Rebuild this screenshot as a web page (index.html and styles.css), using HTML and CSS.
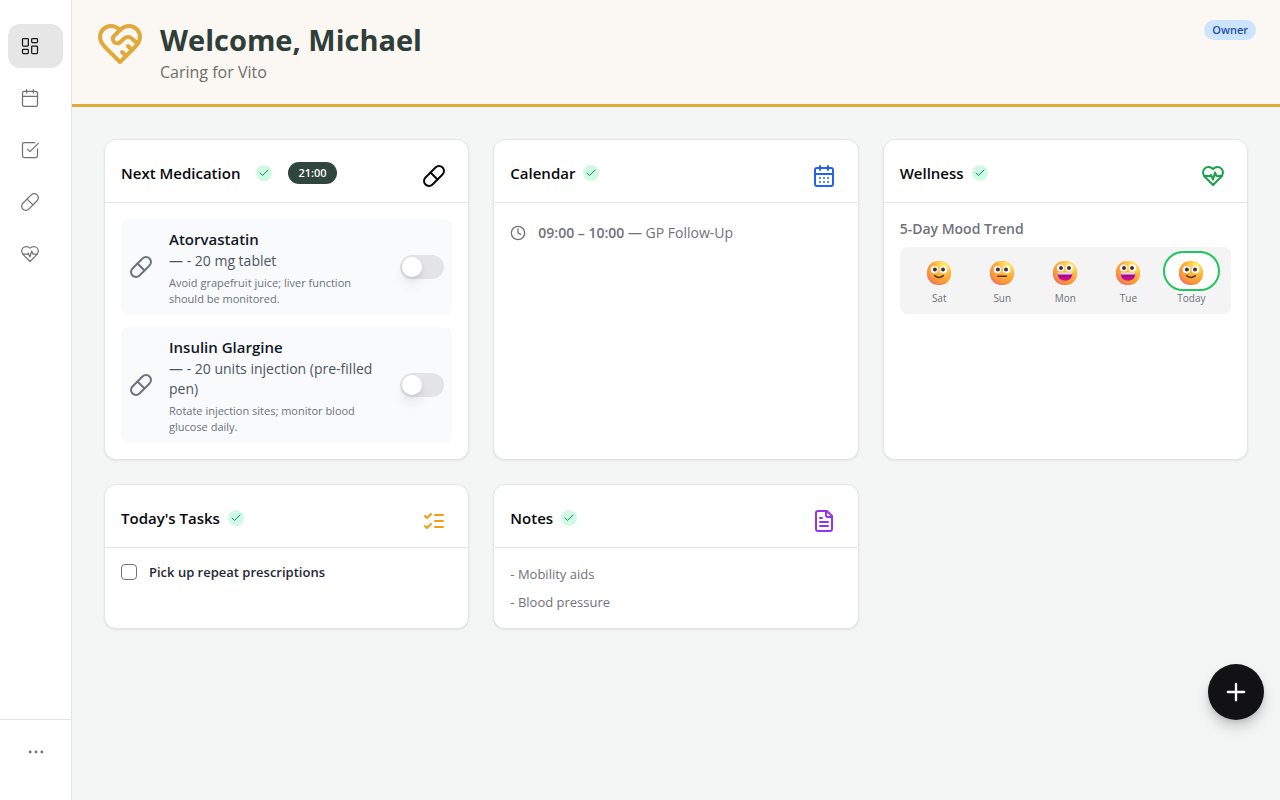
FILE: index.html
```html
<!DOCTYPE html>
<html lang="en">
<head>
    <meta charset="UTF-8">
    <meta name="viewport" content="width=device-width, initial-scale=1.0">
    <title>Dashboard</title>
    <link rel="stylesheet" href="styles.css">
</head>
<body>

    <!-- shared icons -->
    <svg class="sprite" width="0" height="0" aria-hidden="true">
        <defs>
            <radialGradient id="face" cx="0.72" cy="0.2" r="0.9">
                <stop offset="0" stop-color="#fff478"/>
                <stop offset="0.45" stop-color="#ffb43c"/>
                <stop offset="0.8" stop-color="#fb9538"/>
                <stop offset="1" stop-color="#ee6a70"/>
            </radialGradient>
            <linearGradient id="mouth" x1="0" y1="0" x2="0" y2="1">
                <stop offset="0" stop-color="#8a0a8c"/>
                <stop offset="1" stop-color="#dc0c94"/>
            </linearGradient>
        </defs>
        <symbol id="pill" viewBox="0 0 24 24">
            <path d="m10.5 20.5 10-10a4.95 4.95 0 1 0-7-7l-10 10a4.95 4.95 0 1 0 7 7Z"/>
            <path d="m8.5 8.5 7 7"/>
        </symbol>
        <symbol id="heart-pulse" viewBox="0 0 24 24">
            <path d="M19 14c1.49-1.46 3-3.21 3-5.5A5.5 5.5 0 0 0 16.5 3c-1.76 0-3 .5-4.5 2-1.5-1.5-2.74-2-4.5-2A5.5 5.5 0 0 0 2 8.5c0 2.3 1.5 4.05 3 5.5l7 7Z"/>
            <path d="M3.22 12H9.5l.5-1 2 4.5 2-7 1.5 3.5h5.27"/>
        </symbol>
        <symbol id="check" viewBox="0 0 24 24">
            <path d="M20 6 9 17l-5-5"/>
        </symbol>
        <symbol id="eyes" viewBox="0 0 24 24">
            <rect width="24" height="24" rx="11" fill="url(#face)"/>
            <circle cx="7.4" cy="8.7" r="3.6" fill="#fff"/>
            <circle cx="16.5" cy="8.7" r="3.6" fill="#fff"/>
            <circle cx="7.9" cy="8.6" r="2" fill="#4a2b3c"/>
            <circle cx="16" cy="8.6" r="2" fill="#4a2b3c"/>
        </symbol>
        <symbol id="smile" viewBox="0 0 24 24">
            <use href="#eyes"/>
            <path d="M7.6 14.6q4.4 3.6 8.8 0" fill="none" stroke="#5a3030" stroke-width="1.5" stroke-linecap="round"/>
        </symbol>
        <symbol id="neutral" viewBox="0 0 24 24">
            <use href="#eyes"/>
            <path d="M7.8 15.3h8.6" fill="none" stroke="#5a3030" stroke-width="1.6" stroke-linecap="round"/>
        </symbol>
        <symbol id="grin" viewBox="0 0 24 24">
            <rect width="24" height="24" rx="11" fill="url(#face)"/>
            <circle cx="7.6" cy="7" r="3.6" fill="#fff"/>
            <circle cx="16.4" cy="7" r="3.6" fill="#fff"/>
            <circle cx="8" cy="6.9" r="2" fill="#4a2b3c"/>
            <circle cx="16" cy="6.9" r="2" fill="#4a2b3c"/>
            <path d="M4.6 12h14.8c0 4.8-2.8 7.7-7.4 7.7S4.6 16.8 4.6 12z" fill="url(#mouth)"/>
            <path d="M4.6 11.6h14.8l-.3 1.8H4.9z" fill="#f3d9e6"/>
        </symbol>
    </svg>

    <aside class="sidebar">
        <nav class="nav">
            <a class="nav-link active" href="#" aria-label="Dashboard">
                <svg class="icon" viewBox="0 0 24 24"><rect width="7" height="9" x="3" y="3" rx="1"/><rect width="7" height="5" x="14" y="3" rx="1"/><rect width="7" height="9" x="14" y="12" rx="1"/><rect width="7" height="5" x="3" y="16" rx="1"/></svg>
            </a>
            <a class="nav-link" href="#" aria-label="Calendar">
                <svg class="icon" viewBox="0 0 24 24"><path d="M8 2v4M16 2v4"/><rect width="18" height="18" x="3" y="4" rx="2"/><path d="M3 10h18"/></svg>
            </a>
            <a class="nav-link" href="#" aria-label="Tasks">
                <svg class="icon" viewBox="0 0 24 24"><path d="M21 10.5V19a2 2 0 0 1-2 2H5a2 2 0 0 1-2-2V5a2 2 0 0 1 2-2h12.5"/><path d="m9 11 3 3L22 4"/></svg>
            </a>
            <a class="nav-link" href="#" aria-label="Medication">
                <svg class="icon"><use href="#pill"/></svg>
            </a>
            <a class="nav-link" href="#" aria-label="Wellness">
                <svg class="icon"><use href="#heart-pulse"/></svg>
            </a>
        </nav>
        <div class="sidebar-footer">
            <button class="more" type="button" aria-label="More">
                <svg class="icon" viewBox="0 0 24 24"><circle cx="5" cy="12" r="1"/><circle cx="12" cy="12" r="1"/><circle cx="19" cy="12" r="1"/></svg>
            </button>
        </div>
    </aside>

    <div class="page">
        <header class="top">
            <svg class="logo" viewBox="0 0 24 24"><path d="M19 14c1.49-1.46 3-3.21 3-5.5A5.5 5.5 0 0 0 16.5 3c-1.76 0-3 .5-4.5 2-1.5-1.5-2.74-2-4.5-2A5.5 5.5 0 0 0 2 8.5c0 2.3 1.5 4.05 3 5.5l7 7Z"/><path d="M12 5 9.04 7.96a2.17 2.17 0 0 0 0 3.08c.82.82 2.13.85 3 .07l2.07-1.9a2.82 2.82 0 0 1 3.79 0l2.96 2.66"/><path d="m18 15-2-2"/><path d="m15 18-2-2"/></svg>
            <div class="greeting">
                <h1>Welcome, Michael</h1>
                <p>Caring for Vito</p>
            </div>
            <span class="role">Owner</span>
        </header>

        <main class="grid">
            <section class="card">
                <div class="card-head">
                    <div class="card-title wide">
                        <h2>Next Medication</h2>
                        <span class="ok"><svg><use href="#check"/></svg></span>
                        <span class="time">21:00</span>
                    </div>
                    <svg class="card-icon"><use href="#pill"/></svg>
                </div>
                <ul class="card-body meds">
                    <li class="med">
                        <svg class="med-icon"><use href="#pill"/></svg>
                        <label class="med-text" for="med-1">
                            <span class="med-name">Atorvastatin</span>
                            <span class="med-dose">— - 20 mg tablet</span>
                            <span class="med-note">Avoid grapefruit juice; liver function<br>should be monitored.</span>
                        </label>
                        <input class="switch" type="checkbox" id="med-1">
                    </li>
                    <li class="med">
                        <svg class="med-icon"><use href="#pill"/></svg>
                        <label class="med-text" for="med-2">
                            <span class="med-name">Insulin Glargine</span>
                            <span class="med-dose">— - 20 units injection (pre-filled pen)</span>
                            <span class="med-note">Rotate injection sites; monitor blood<br>glucose daily.</span>
                        </label>
                        <input class="switch" type="checkbox" id="med-2">
                    </li>
                </ul>
            </section>

            <section class="card">
                <div class="card-head">
                    <div class="card-title">
                        <h2>Calendar</h2>
                        <span class="ok"><svg><use href="#check"/></svg></span>
                    </div>
                    <svg class="card-icon blue" viewBox="0 0 24 24"><path d="M8 2v4M16 2v4"/><rect width="18" height="18" x="3" y="4" rx="2"/><path d="M3 10h18M8 14h.01M12 14h.01M16 14h.01M8 18h.01M12 18h.01M16 18h.01"/></svg>
                </div>
                <div class="card-body">
                    <p class="event">
                        <svg viewBox="0 0 24 24"><circle cx="12" cy="12" r="10"/><path d="M12 6v6l4 2"/></svg>
                        <span><b>09:00 – 10:00</b> — GP Follow-Up</span>
                    </p>
                </div>
            </section>

            <section class="card">
                <div class="card-head">
                    <div class="card-title">
                        <h2>Wellness</h2>
                        <span class="ok"><svg><use href="#check"/></svg></span>
                    </div>
                    <svg class="card-icon green"><use href="#heart-pulse"/></svg>
                </div>
                <div class="card-body">
                    <h3>5-Day Mood Trend</h3>
                    <ul class="moods">
                        <li><span class="mood"><svg><use href="#smile"/></svg></span>Sat</li>
                        <li><span class="mood"><svg><use href="#neutral"/></svg></span>Sun</li>
                        <li><span class="mood"><svg><use href="#grin"/></svg></span>Mon</li>
                        <li><span class="mood"><svg><use href="#grin"/></svg></span>Tue</li>
                        <li><span class="mood today"><svg><use href="#smile"/></svg></span>Today</li>
                    </ul>
                </div>
            </section>

            <section class="card">
                <div class="card-head">
                    <div class="card-title">
                        <h2>Today's Tasks</h2>
                        <span class="ok"><svg><use href="#check"/></svg></span>
                    </div>
                    <svg class="card-icon amber" viewBox="0 0 24 24"><path d="m3 17 2 2 4-4M3 7l2 2 4-4M13 6h8M13 12h8M13 18h8"/></svg>
                </div>
                <div class="card-body compact">
                    <label class="task"><input type="checkbox"> Pick up repeat prescriptions</label>
                </div>
            </section>

            <section class="card">
                <div class="card-head">
                    <div class="card-title">
                        <h2>Notes</h2>
                        <span class="ok"><svg><use href="#check"/></svg></span>
                    </div>
                    <svg class="card-icon purple" viewBox="0 0 24 24"><path d="M15 2H6a2 2 0 0 0-2 2v16a2 2 0 0 0 2 2h12a2 2 0 0 0 2-2V7Z"/><path d="M14 2v4a2 2 0 0 0 2 2h4M10 9H8M16 13H8M16 17H8"/></svg>
                </div>
                <div class="card-body compact notes">
                    <p>- Mobility aids</p>
                    <p>- Blood pressure</p>
                </div>
            </section>
        </main>
    </div>

    <button class="fab" type="button" aria-label="Add">
        <svg viewBox="0 0 24 24"><path d="M5 12h14M12 5v14"/></svg>
    </button>

</body>
</html>
```
FILE: styles.css
```css
* {
    margin: 0;
    padding: 0;
    box-sizing: border-box;
}

body {
    display: flex;
    min-height: 100vh;
    background: #f4f6f5;
    color: #09090b;
    font-family: "Segoe UI", "Open Sans", "Noto Sans", sans-serif;
    font-size: 14px;
    line-height: 20px;
}

ul {
    list-style: none;
}

button {
    border: none;
    background: none;
    cursor: pointer;
}

svg {
    flex-shrink: 0;
    fill: none;
    stroke: currentColor;
    stroke-width: 2;
    stroke-linecap: round;
    stroke-linejoin: round;
}

#eyes *,
#grin * {
    stroke: none;
}

.sprite {
    position: absolute;
}

/* sidebar */
.sidebar {
    position: sticky;
    top: 0;
    display: flex;
    flex-direction: column;
    flex-shrink: 0;
    width: 72px;
    height: 100vh;
    background: #fff;
    border-right: 1px solid #e4e4e7;
}

.nav {
    display: flex;
    flex-direction: column;
    flex: 1;
    gap: 8px;
    padding: 24px 8px;
}

.nav-link {
    display: flex;
    align-items: center;
    height: 44px;
    padding: 0 12px;
    border-radius: 12px;
    color: #71717a;
}

.nav-link.active {
    background: #e6e6e6;
    color: #18181b;
}

.icon {
    width: 20px;
    height: 20px;
    stroke-width: 1.5;
}

.sidebar-footer {
    display: flex;
    align-items: center;
    justify-content: center;
    height: 81px;
    padding-bottom: 16px;
    border-top: 1px solid #e4e4e7;
}

.more {
    display: flex;
    padding: 8px;
    color: #71717a;
}

/* header */
.page {
    flex: 1;
    min-width: 0;
}

.top {
    display: flex;
    align-items: flex-start;
    gap: 16px;
    padding: 20px 24px;
    background: #fbf7f2;
    border-bottom: 3px solid #e0a93b;
}

.logo {
    width: 48px;
    height: 48px;
    color: #e0a93b;
}

.greeting {
    flex: 1;
}

.greeting h1 {
    color: #2f3e38;
    font-size: 29px;
    line-height: 40px;
}

.greeting p {
    color: #6b7068;
    font-size: 16px;
    line-height: 24px;
}

.role {
    padding: 0 8px;
    border-radius: 10px;
    background: #cce4ff;
    color: #1d4ea3;
    font-size: 11px;
    font-weight: 600;
}

/* cards */
.grid {
    display: grid;
    grid-template-columns: repeat(3, minmax(0, 1fr));
    gap: 24px;
    padding: 32px;
}

.card {
    background: #fff;
    border: 1px solid #e4e4e7;
    border-radius: 12px;
    box-shadow: 0 1px 2px rgba(0, 0, 0, 0.08);
}

.card-head {
    display: flex;
    align-items: flex-start;
    justify-content: space-between;
    padding: 22px 22px 14px 16px;
    border-bottom: 1px solid #e4e4e7;
}

.card-title {
    display: flex;
    align-items: center;
    gap: 8px;
    height: 22px;
}

.card-title.wide {
    gap: 16px;
}

.card-title h2 {
    font-size: 15px;
    font-weight: 600;
    line-height: 22px;
}

.ok {
    display: flex;
    align-items: center;
    justify-content: center;
    width: 16px;
    height: 16px;
    border-radius: 50%;
    background: #d1fae5;
    color: #059669;
}

.ok svg {
    width: 12px;
    height: 12px;
}

.time {
    padding: 0 10px;
    border-radius: 11px;
    background: #2f463e;
    color: #fff;
    font-size: 11px;
    font-weight: 600;
    line-height: 22px;
}

.card-icon {
    width: 24px;
    height: 24px;
    margin-top: 2px;
}

.blue {
    color: #2563eb;
}

.green {
    color: #16a34a;
}

.amber {
    color: #f59e0b;
}

.purple {
    color: #9333ea;
}

.card-body {
    padding: 16px;
}

.card-body.compact {
    padding: 12px 16px;
}

/* medication */
.meds {
    display: flex;
    flex-direction: column;
    gap: 12px;
}

.med {
    display: flex;
    align-items: center;
    gap: 16px;
    padding: 8px;
    border-radius: 8px;
    background: #f9fafb;
}

.med-icon {
    width: 24px;
    height: 24px;
    color: #6b7280;
}

.med-text {
    display: flex;
    flex-direction: column;
    flex: 1;
}

.med-name {
    color: #111827;
    font-size: 15px;
    font-weight: 600;
    line-height: 24px;
}

.med-dose {
    color: #4b5563;
}

.med-note {
    margin-top: 4px;
    color: #6b7280;
    font-size: 11px;
    line-height: 16px;
}

.switch {
    display: flex;
    align-items: center;
    flex-shrink: 0;
    width: 44px;
    height: 24px;
    padding: 2px;
    border-radius: 12px;
    background: #e4e4e7;
    appearance: none;
    cursor: pointer;
}

.switch::before {
    content: "";
    width: 20px;
    height: 20px;
    border-radius: 50%;
    background: #fff;
    box-shadow: 0 8px 12px rgba(0, 0, 0, 0.08), 0 2px 4px rgba(0, 0, 0, 0.06);
}

.switch:checked {
    justify-content: flex-end;
    background: #18181b;
}

/* calendar */
.event {
    display: flex;
    align-items: center;
    gap: 12px;
    color: #71717a;
    line-height: 28px;
}

.event svg {
    width: 16px;
    height: 16px;
}

.event b {
    font-weight: 600;
}

/* wellness */
h3 {
    margin-bottom: 8px;
    color: #71717a;
    font-size: 14px;
    font-weight: 600;
}

.moods {
    display: flex;
    padding: 4px 8px 8px;
    border-radius: 8px;
    background: #f4f4f4;
}

.moods li {
    flex: 1;
    padding: 0 3px;
    color: #71717a;
    font-size: 10px;
    line-height: 15px;
    text-align: center;
}

.mood {
    display: flex;
    align-items: center;
    justify-content: center;
    height: 40px;
    padding-top: 3px;
    border: 2px solid transparent;
    border-radius: 20px;
}

.mood svg {
    width: 24px;
    height: 24px;
    stroke: none;
}

.mood.today {
    background: #fff;
    border-color: #22c55e;
}

/* tasks and notes */
.task {
    display: flex;
    align-items: center;
    gap: 12px;
    color: #1f2937;
    font-size: 13px;
    font-weight: 600;
    line-height: 24px;
}

.task input {
    width: 16px;
    height: 16px;
    border: 1px solid #71717a;
    border-radius: 4px;
    appearance: none;
}

.task input:checked {
    background: #18181b;
}

.notes {
    color: #71717a;
    font-size: 13px;
    line-height: 28px;
}

/* add button */
.fab {
    position: fixed;
    right: 16px;
    bottom: 80px;
    display: flex;
    align-items: center;
    justify-content: center;
    width: 56px;
    height: 56px;
    border-radius: 50%;
    background: #121214;
    color: #fff;
    box-shadow: 0 8px 14px rgba(0, 0, 0, 0.16), 0 3px 5px rgba(0, 0, 0, 0.1);
}

.fab svg {
    width: 28px;
    height: 28px;
}

@media (max-width: 900px) {
    .grid {
        grid-template-columns: minmax(0, 1fr);
        padding: 16px;
    }
}
```
